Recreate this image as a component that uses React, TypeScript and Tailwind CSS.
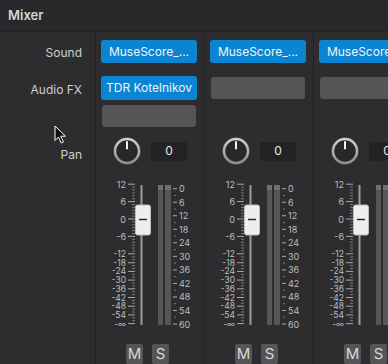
import React from 'react';

const FONT = { fontFamily: 'Inter, "Liberation Sans", sans-serif' };

const LEFT_MAJOR = [12, 6, 0, -6, -12, -18, -24, -30, -36, -42, -48, -54];
const RIGHT_MAJOR = [0, 6, 12, 18, 24, 30, 36, 42, 48, 54, 60];

// fader scale position (svg coords, top of svg = page y 180)
const ly = (db: number) => (db >= -12 ? 41 - db * 2.9 : 76 + ((-12 - db) / 6) * 8.7);
const ry = (v: number) => 10.7 + (v / 6) * 13.53;

function minorLeft() {
  const out: number[] = [];
  for (let d = 11; d > -12; d--) if (d % 6 !== 0) out.push(ly(d));
  for (let d = -14; d > -60; d -= 2) if (d % 6 !== 0) out.push(ly(d));
  return out;
}

function Knob() {
  return (
    <svg width="30" height="30" viewBox="0 0 30 30">
      <defs>
        <linearGradient id="ring" x1="0" y1="0" x2="0" y2="1">
          <stop offset="0" stopColor="#d0d0d0" />
          <stop offset="1" stopColor="#909090" />
        </linearGradient>
      </defs>
      <circle cx="15" cy="15" r="14" fill="#3b3b3d" />
      <circle cx="15" cy="15" r="12" fill="#28282a" stroke="url(#ring)" strokeWidth="2.5" />
      <line x1="15" y1="6" x2="15" y2="12.5" stroke="#f4f4f4" strokeWidth="2" strokeLinecap="round" />
    </svg>
  );
}

function Fader() {
  return (
    <svg width="109" height="150" viewBox="0 0 109 150" style={FONT}>
      {LEFT_MAJOR.map((d) => (
        <g key={d}>
          <text
            x="30"
            y={ly(d)}
            textAnchor="end"
            dominantBaseline="central"
            fontSize={d > -12 ? 9 : 8.5}
            fill="#bdbdbd"
          >
            {d}
          </text>
          <line x1="32" x2="39" y1={ly(d)} y2={ly(d)} stroke="#a8a8a8" strokeWidth="1" />
        </g>
      ))}
      <text x="30" y={ly(-60)} textAnchor="end" dominantBaseline="central" fontSize="8.5" fill="#bdbdbd">
        -∞
      </text>
      <line x1="32" x2="39" y1={ly(-60)} y2={ly(-60)} stroke="#a8a8a8" strokeWidth="1" />
      {minorLeft().map((y, i) => (
        <line key={i} x1="36" x2="39" y1={y} y2={y} stroke="#7a7a7a" strokeWidth="1" />
      ))}

      {/* track */}
      <rect x="44.5" y="7" width="2" height="140" fill="#9c9c9c" />

      {/* meters */}
      <rect x="62" y="7" width="5" height="140" fill="#565658" />
      <rect x="69" y="7" width="6" height="140" fill="#565658" />
      <rect x="62" y="7" width="5" height="5" fill="#707072" />
      <rect x="69" y="7" width="6" height="5" fill="#707072" />

      {RIGHT_MAJOR.map((v) => (
        <g key={v}>
          <line x1="77" x2="81" y1={ry(v)} y2={ry(v)} stroke="#a8a8a8" strokeWidth="1" />
          <text x="83" y={ry(v)} dominantBaseline="central" fontSize="9" fill="#bdbdbd">
            {v}
          </text>
        </g>
      ))}
      {RIGHT_MAJOR.slice(0, -1).map((v) => (
        <line key={v} x1="78" x2="80" y1={ry(v + 3)} y2={ry(v + 3)} stroke="#7a7a7a" strokeWidth="1" />
      ))}

      {/* handle */}
      <rect x="39.5" y="27" width="15" height="30" rx="2" fill="#eeeeee" stroke="#bcbcbc" strokeWidth="1" />
      <line x1="43" x2="51" y1="41.5" y2="41.5" stroke="#2a2a2a" strokeWidth="1.5" />
    </svg>
  );
}

function Slot({ label }: { label?: string }) {
  if (label) {
    return (
      <div className="h-[24px] w-[96px] ml-[5px] rounded-[3px] bg-[#0b84d1] flex items-center justify-center text-[12px] text-[#eef6fc] whitespace-nowrap">
        {label}
      </div>
    );
  }
  return (
    <div className="h-[24px] w-[96px] ml-[5px] p-px">
      <div className="h-full rounded-[3px] bg-[#555557]" />
    </div>
  );
}

function Channel({ fx }: { fx: (string | null)[] }) {
  return (
    <div className="w-[109px] shrink-0 border-r border-[#222225] flex flex-col">
      <div className="mt-2 h-[25px] w-[96px] ml-[5px] rounded-[3px] bg-[#0b84d1] flex items-center justify-center text-[12px] text-[#eef6fc] whitespace-nowrap">
        MuseScore_...
      </div>
      <div className="mt-[13px] flex flex-col gap-[4px]">
        {fx.map((f, i) =>
          f === null ? <div key={i} className="h-[24px]" /> : <Slot key={i} label={f || undefined} />
        )}
      </div>
      <div className="mt-[8px] h-[30px] flex items-center pl-[16px]">
        <Knob />
        <div className="ml-[9px] w-[36px] h-[19px] rounded-[2px] bg-[#232325] flex items-center justify-center text-[12px] text-[#e6e6e6]">
          0
        </div>
      </div>
      <div className="mt-[12px]">
        <Fader />
      </div>
      <div className="mt-[16px] flex pl-[30px] gap-[9px]">
        <div className="w-[17px] h-[20px] rounded-[2px] bg-[#555557] flex items-center justify-center text-[15px] text-[#d8d8d8]">
          M
        </div>
        <div className="w-[17px] h-[20px] rounded-[2px] bg-[#555557] flex items-center justify-center text-[15px] text-[#d8d8d8]">
          S
        </div>
      </div>
    </div>
  );
}

export default function App() {
  return (
    <div className="relative w-[388px] h-[364px] overflow-hidden bg-[#2d2d30] flex flex-col" style={FONT}>
      <div className="h-[32px] shrink-0 bg-[#29292c] border-b border-[#222225] flex items-center px-2 text-[13px] font-semibold text-[#d6d6d6]">
        Mixer
      </div>
      <div className="flex flex-1 min-h-0">
        <div className="w-[96px] shrink-0 border-r border-[#222225] flex">
          <div className="w-[10px] shrink-0 border-r border-[#313134]" />
          <div className="flex-1 flex flex-col items-end pr-[13px] text-[12px] text-[#cfcfcf]">
            <div className="mt-2 h-[25px] flex items-center">Sound</div>
            <div className="mt-[13px] h-[24px] flex items-center">Audio FX</div>
            <div className="mt-[36px] h-[30px] flex items-center pt-[3px]">Pan</div>
          </div>
        </div>
        <Channel fx={['TDR Kotelnikov', '']} />
        <Channel fx={['', null]} />
        <Channel fx={['', null]} />
      </div>
      <svg className="absolute left-[54px] top-[125px]" width="14" height="20" viewBox="0 0 14 20">
        <path
          d="M1 1 L1 15.5 L4.5 12 L7.2 18 L9.5 17 L6.8 11.2 L11.5 11.2 Z"
          fill="#111"
          stroke="#fff"
          strokeWidth="1"
          strokeLinejoin="round"
        />
      </svg>
    </div>
  );
}
